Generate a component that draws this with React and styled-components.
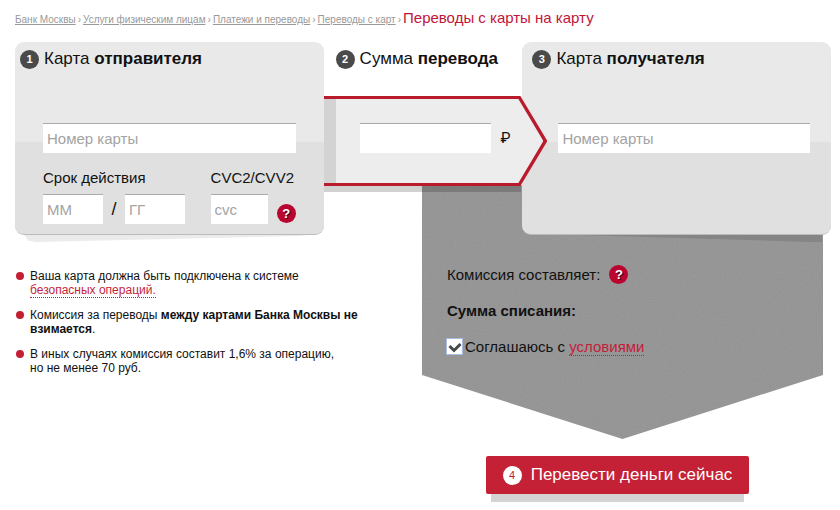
import React from "react";
import styled, { createGlobalStyle } from "styled-components";

const GlobalStyle = createGlobalStyle`
  * { box-sizing: border-box; }
  body {
    margin: 0;
    background: #fff;
    color: #111;
    font-family: "Liberation Sans", Arial, sans-serif;
    font-size: 15px;
  }
`;

const Page = styled.main`
  padding: 8px 9px 8px 15px;
`;

const Breadcrumbs = styled.nav`
  display: flex;
  align-items: baseline;
  gap: 2px;
  height: 34px;
  font-size: 10px;
  line-height: 20px;
  color: #999;
  white-space: nowrap;
`;

const CrumbLink = styled.a`
  color: #999;
  text-decoration: underline;
`;

const PageTitle = styled.h1`
  margin: 0;
  font-size: 15px;
  font-weight: 400;
  color: #c1143a;
`;

const Steps = styled.div`
  position: relative;
  z-index: 1;
  display: grid;
  grid-template-columns: 309fr 199fr 309fr;
`;

const Card = styled.section`
  position: relative;
  min-height: 193px;
  padding: 7px ${(p) => (p.$inset === "wide" ? "21px 10px 36px" : "28px 10px 28px")};
  border-radius: 9px;
  border-bottom: 1px solid #bbb;
  background: linear-gradient(#e9e9e9 100px, #e0e0e0 100px);
`;

const CardShade = styled.div`
  position: absolute;
  z-index: -1;
  top: 100%;
  left: 9px;
  right: 9px;
  height: 8px;
  background: ${(p) => (p.$side === "left" ? "#ebebeb" : "#858585")};
  clip-path: ${(p) =>
    p.$side === "left"
      ? "polygon(0 0, 100% 0, 95% 2px, 12px 100%, 4px 80%)"
      : "polygon(5% 0, 100% 0, 100% 100%, 96% 100%)"};
`;

const Middle = styled.section`
  padding: 7px 0 0 12px;
`;

const StepHeading = styled.h2`
  display: flex;
  align-items: center;
  gap: 5px;
  height: 20px;
  margin: 0 0 0 ${(p) => p.$outdent || 0}px;
  font-size: 17px;
  font-weight: 400;
  white-space: nowrap;
`;

const StepNumber = styled.span`
  display: inline-flex;
  flex: none;
  align-items: center;
  justify-content: center;
  width: 19px;
  height: 19px;
  border-radius: 50%;
  font-size: 11px;
  font-weight: ${(p) => (p.$light ? 400 : 700)};
  color: ${(p) => (p.$light ? "#c32136" : "#fff")};
  background: ${(p) => (p.$light ? "#fff" : "#4a4a4a")};
`;

const TextInput = styled.input`
  display: block;
  width: ${(p) => p.$width || "100%"};
  height: 30px;
  padding: 0 4px;
  border: 0;
  border-top: 1px solid #aaa;
  border-radius: 0;
  background: #fff;
  font: inherit;
  color: #222;
  &::placeholder { color: #a3a3a3; opacity: 1; }
`;

const CardNumber = styled.div`
  margin-top: 54px;
`;

const Fields = styled.div`
  display: flex;
  justify-content: space-between;
  margin-top: 16px;
`;

const FieldGroup = styled.div`
  line-height: 18px;
`;

const FieldLabel = styled.label`
  display: block;
`;

const InputRow = styled.div`
  display: flex;
  align-items: center;
  gap: ${(p) => p.$gap}px;
  height: 30px;
  margin-top: 7px;
`;

const Slash = styled.span`
  width: 6px;
  font-size: 18px;
  text-align: center;
`;

const HelpButton = styled.button`
  flex: none;
  width: 19px;
  height: 19px;
  padding: 0;
  border: 0;
  border-radius: 50%;
  background: #b9052f;
  color: #fff;
  font: 700 13px/19px "Liberation Sans", Arial, sans-serif;
  text-shadow: 1px 1px 0 #4d0014;
`;

const CvcHelp = styled.div`
  margin-top: 8px;
  display: flex;
`;

const ArrowWrap = styled.div`
  position: relative;
  z-index: 2;
  margin: 27px -25px 0 -12px;
`;

const ArrowShadow = styled.div`
  height: 6px;
  margin-right: 26px;
  background: rgba(0, 0, 0, 0.18);
`;

const Arrow = styled.div`
  height: 90px;
  padding: 3px 4px 3px 0;
  background: #b91a2c;
  clip-path: polygon(0 0, calc(100% - 27px) 0, 100% 50%, calc(100% - 27px) 100%, 0 100%);
`;

const ArrowBody = styled.div`
  display: flex;
  align-items: flex-start;
  gap: 9px;
  height: 84px;
  padding: 24px 33px 0 36px;
  background: linear-gradient(90deg, #d3d3d3 12px, #ededed 12px);
  clip-path: polygon(0 0, calc(100% - 25px) 0, 100% 50%, calc(100% - 25px) 100%, 0 100%);
`;

const Currency = styled.span`
  flex: none;
  width: 10px;
  font-family: Roboto, "Liberation Sans", sans-serif;
  line-height: 31px;
`;

const Lower = styled.div`
  display: grid;
  grid-template-columns: 407fr 401fr;
  padding-right: 8px;
`;

const Notes = styled.ul`
  margin: 34px 60px 0 0;
  padding: 0;
  list-style: none;
  font-size: 12px;
  line-height: 14px;
`;

const Note = styled.li`
  display: grid;
  grid-template-columns: 8px 1fr;
  gap: 6px;
  margin: 0 0 11px 1px;
  &::before {
    content: "";
    width: 8px;
    height: 8px;
    margin-top: 3px;
    border-radius: 50%;
    background: #c41e35;
  }
`;

const DottedLink = styled.a`
  color: #c41e3a;
  text-decoration: none;
  border-bottom: 1px dotted #c41e3a;
`;

const Summary = styled.section`
  position: relative;
  height: 254px;
  margin-top: -50px;
  padding: 79px 24px 0;
  background: #949494;
  clip-path: polygon(0 0, 100% 0, 100% calc(100% - 64px), 50% 100%, 0 calc(100% - 64px));
`;

const Grain = styled.svg`
  position: absolute;
  inset: 0;
  width: 100%;
  height: 100%;
  opacity: 0.12;
`;

const SummaryRow = styled.div`
  position: relative;
  display: flex;
  align-items: center;
  gap: 9px;
  height: 20px;
  margin-bottom: 16px;
  padding-left: ${(p) => (p.$flush ? 0 : 1)}px;
  font-weight: ${(p) => (p.$strong ? 700 : 400)};
`;

const Checkbox = styled.input`
  appearance: none;
  flex: none;
  width: 17px;
  height: 17px;
  margin: 0 2px 0 0;
  border: 1px solid #a9bce0;
  background: #fff;
`;

const CheckLabel = styled.label`
  display: flex;
  align-items: center;
  position: relative;
`;

const CheckMark = styled.svg`
  position: absolute;
  left: 2px;
  top: 2px;
  width: 14px;
  height: 14px;
  pointer-events: none;
  ${Checkbox}:not(:checked) + & { display: none; }
`;

const Terms = styled.span`
  white-space: pre;
`;

const Submit = styled.button`
  display: flex;
  align-items: center;
  gap: 9px;
  height: 38px;
  padding: 0 17px;
  border: 0;
  border-radius: 2px;
  background: #c42136;
  color: #fff;
  font: 400 17px "Liberation Sans", Arial, sans-serif;
  white-space: nowrap;
`;

const SubmitWrap = styled.div`
  grid-column: 2;
  justify-self: center;
  margin: 17px 10px 0 0;
  &::after {
    content: "";
    display: block;
    height: 8px;
    margin: 0 5px;
    background: #d4d4d4;
  }
`;

const crumbs = ["Банк Москвы", "Услуги физическим лицам", "Платежи и переводы", "Переводы с карт"];

function Heading({ number, word, strong, outdent }) {
  return (
    <StepHeading $outdent={outdent}>
      <StepNumber>{number}</StepNumber>
      <span>
        {word} <b>{strong}</b>
      </span>
    </StepHeading>
  );
}

export default function App() {
  return (
    <>
      <GlobalStyle />
      <Page>
        <Breadcrumbs>
          {crumbs.map((c) => (
            <React.Fragment key={c}>
              <CrumbLink href="#">{c}</CrumbLink>
              <span>›</span>
            </React.Fragment>
          ))}
          <PageTitle>Переводы с карты на карту</PageTitle>
        </Breadcrumbs>

        <Steps>
          <Card>
            <Heading number="1" word="Карта" strong="отправителя" outdent={-23} />
            <CardNumber>
              <TextInput placeholder="Номер карты" aria-label="Номер карты отправителя" />
            </CardNumber>
            <Fields>
              <FieldGroup>
                <FieldLabel htmlFor="month">Срок действия</FieldLabel>
                <InputRow $gap={8}>
                  <TextInput id="month" $width="60px" placeholder="ММ" />
                  <Slash>/</Slash>
                  <TextInput $width="60px" placeholder="ГГ" aria-label="Год" />
                </InputRow>
              </FieldGroup>
              <FieldGroup>
                <FieldLabel htmlFor="cvc">CVC2/CVV2</FieldLabel>
                <InputRow $gap={9}>
                  <TextInput id="cvc" $width="57px" placeholder="cvc" />
                  <CvcHelp>
                    <HelpButton type="button" aria-label="Что такое CVC2/CVV2">?</HelpButton>
                  </CvcHelp>
                </InputRow>
              </FieldGroup>
            </Fields>
            <CardShade $side="left" />
          </Card>

          <Middle>
            <Heading number="2" word="Сумма" strong="перевода" />
            <ArrowWrap>
              <Arrow>
                <ArrowBody>
                  <TextInput aria-label="Сумма перевода" />
                  <Currency>₽</Currency>
                </ArrowBody>
              </Arrow>
              <ArrowShadow />
            </ArrowWrap>
          </Middle>

          <Card $inset="wide">
            <Heading number="3" word="Карта" strong="получателя" outdent={-26} />
            <CardNumber>
              <TextInput placeholder="Номер карты" aria-label="Номер карты получателя" />
            </CardNumber>
            <CardShade $side="right" />
          </Card>
        </Steps>

        <Lower>
          <Notes>
            <Note>
              <span>
                Ваша карта должна быть подключена к системе
                <br />
                <DottedLink href="#">безопасных операций.</DottedLink>
              </span>
            </Note>
            <Note>
              <span>
                Комиссия за переводы <b>между картами Банка Москвы не взимается</b>.
              </span>
            </Note>
            <Note>
              <span>
                В иных случаях комиссия составит 1,6% за операцию,
                <br />
                но не менее 70 руб.
              </span>
            </Note>
          </Notes>
          <Summary>
            <Grain aria-hidden="true">
              <filter id="grain">
                <feTurbulence type="fractalNoise" baseFrequency="0.7" numOctaves="2" />
                <feColorMatrix type="saturate" values="0" />
              </filter>
              <rect width="100%" height="100%" filter="url(#grain)" />
            </Grain>
            <SummaryRow>
              <span>Комиссия составляет:</span>
              <HelpButton type="button" aria-label="О комиссии">?</HelpButton>
            </SummaryRow>
            <SummaryRow $strong>Сумма списания:</SummaryRow>
            <SummaryRow $flush>
              <CheckLabel>
                <Checkbox type="checkbox" defaultChecked />
                <CheckMark viewBox="0 0 14 14">
                  <path d="M1.5 6 6 10.5 12.5 4" fill="none" stroke="#484848" strokeWidth="3" />
                </CheckMark>
                <Terms>
                  Соглашаюсь с <DottedLink href="#">условиями</DottedLink>
                </Terms>
              </CheckLabel>
            </SummaryRow>
          </Summary>
          <SubmitWrap>
            <Submit type="button">
              <StepNumber $light>4</StepNumber>
              Перевести деньги сейчас
            </Submit>
          </SubmitWrap>
        </Lower>
      </Page>
    </>
  );
}
